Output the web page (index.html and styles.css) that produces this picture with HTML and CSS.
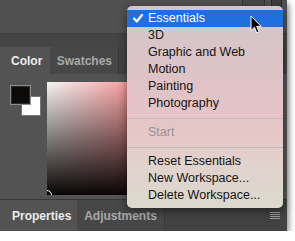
FILE: index.html
```html
<!DOCTYPE html>
<html lang="en">
<head>
  <meta charset="UTF-8">
  <title>Workspace Menu</title>
  <link rel="stylesheet" href="styles.css">
</head>
<body>

  <div class="panel">
    <div class="topbar">
      <span class="tb-btn wide"></span>
      <span class="tb-btn"></span>
    </div>
    <div class="band"></div>

    <div class="tabs">
      <div class="tab active">Color</div>
      <div class="tab">Swatches</div>
    </div>

    <div class="color-body">
      <div class="swatches">
        <div class="bg-swatch"></div>
        <div class="fg-swatch"></div>
      </div>
      <div class="field">
        <span class="ring"></span>
      </div>
    </div>

    <div class="tabs bottom">
      <div class="tab active">Properties</div>
      <div class="tab">Adjustments</div>
      <div class="panel-menu">
        <span></span><span></span><span></span><span></span>
      </div>
    </div>

    <!-- Workspace dropdown -->
    <div class="menu">
      <div class="item selected">
        <svg class="check" width="10" height="9" viewBox="0 0 10 9">
          <polyline points="1,4.5 3.8,7.5 9,1" fill="none" stroke="#fff" stroke-width="2.2" stroke-linecap="round" stroke-linejoin="round"/>
        </svg>
        Essentials
      </div>
      <div class="item">3D</div>
      <div class="item">Graphic and Web</div>
      <div class="item">Motion</div>
      <div class="item">Painting</div>
      <div class="item">Photography</div>
      <div class="sep"></div>
      <div class="item disabled">Start</div>
      <div class="sep"></div>
      <div class="item">Reset Essentials</div>
      <div class="item">New Workspace...</div>
      <div class="item">Delete Workspace...</div>
    </div>

    <svg class="cursor" width="13" height="20" viewBox="0 0 13 20">
      <path d="M1 1 L1 15.5 L4.4 12.3 L6.9 18 L9.1 17 L6.7 11.4 L11.2 11.4 Z" fill="#000" stroke="#fff" stroke-width="1" stroke-linejoin="round"/>
    </svg>
  </div>

</body>
</html>
```

FILE: styles.css
```css
* {
  box-sizing: border-box;
}

body {
  margin: 0;
  background: #ffffff;
  font-family: 'Liberation Sans', Arial, sans-serif;
}

.panel {
  position: relative;
  width: 287px;
  height: 231px;
  background: #535353;
  display: flex;
  flex-direction: column;
  box-shadow: 2px 3px 6px rgba(0, 0, 0, 0.45);
}

/* Top bar */
.topbar {
  height: 34px;
  background: #505050;
  border-bottom: 1px solid #3e3e3e;
  display: flex;
  justify-content: flex-end;
  align-items: flex-start;
  gap: 6px;
  padding-right: 5px;
}

.tb-btn {
  width: 11px;
  height: 8px;
  background: #3c3c3c;
  border: 1px solid #2c2c2c;
  border-top: none;
  border-radius: 0 0 2px 2px;
}

.tb-btn.wide {
  width: 23px;
  background: #474747;
  border-color: #333;
}

.band {
  height: 13px;
  background: #454545;
}

/* Tabs */
.tabs {
  height: 27px;
  background: #424242;
  display: flex;
  align-items: stretch;
}

.tab {
  display: flex;
  align-items: center;
  padding: 0 9px;
  font-size: 12px;
  font-weight: bold;
  color: #a9a9a9;
  background: #474747;
  border-right: 1px solid #383838;
}

.tab.active {
  background: #535353;
  color: #ececec;
  padding: 0 8px 0 11px;
  border-right: none;
}

.tabs .tab:nth-child(2) {
  width: 69px;
  justify-content: center;
  padding: 0;
}

.tabs.bottom {
  height: 32px;
  border-top: 1px solid #383838;
}

.tabs.bottom .tab.active {
  padding: 0 9px 0 12px;
  width: 77px;
}

.tabs.bottom .tab:nth-child(2) {
  width: 88px;
}

.panel-menu {
  margin-left: auto;
  margin-right: 7px;
  display: flex;
  flex-direction: column;
  justify-content: center;
  gap: 1px;
}

.panel-menu span {
  display: block;
  width: 10px;
  height: 1px;
  background: #9c9c9c;
}

/* Color panel body */
.color-body {
  flex: 1;
  display: flex;
  align-items: flex-start;
  padding: 8px 0 0 10px;
  gap: 6px;
}

.swatches {
  position: relative;
  width: 31px;
  height: 31px;
  margin-top: 3px;
}

.fg-swatch {
  position: absolute;
  left: 0;
  top: 0;
  width: 21px;
  height: 20px;
  background: #0d0a0a;
  border: 1px solid #8c8c8c;
  box-shadow: inset 0 0 0 1px #2a2a2a;
}

.bg-swatch {
  position: absolute;
  right: 0;
  bottom: 0;
  width: 20px;
  height: 20px;
  background: #ffffff;
  border: 1px solid #777;
}

.field {
  position: relative;
  width: 222px;
  height: 113px;
  background:
    linear-gradient(to bottom, rgba(0, 0, 0, 0) 0%, #0a0505 100%),
    linear-gradient(to right, #f4f4f4 0%, #ff2a2a 85%, #ff2020 100%);
  overflow: hidden;
}

.ring {
  position: absolute;
  left: -5px;
  bottom: -5px;
  width: 10px;
  height: 10px;
  border: 1px solid #fff;
  border-radius: 50%;
}

/* Dropdown menu */
.menu {
  position: absolute;
  left: 127px;
  top: 6px;
  width: 156px;
  height: 202px;
  padding: 4px 0;
  border-radius: 5px;
  background: linear-gradient(to bottom, #cfc7ca 0%, #d9c4c7 22%, #e4c3c6 50%, #e6c8c8 65%, #e0d3ce 80%, #dcd9cc 100%);
  box-shadow: 0 3px 10px rgba(0, 0, 0, 0.45);
}

.item {
  position: relative;
  height: 17px;
  line-height: 17px;
  padding-left: 21px;
  font-size: 12.5px;
  color: #161414;
  white-space: nowrap;
}

.item.selected {
  background: #1f6fde;
  color: #ffffff;
}

.item.disabled {
  color: #9a9090;
}

.check {
  position: absolute;
  left: 6px;
  top: 4px;
}

.sep {
  height: 12px;
  display: flex;
  align-items: center;
}

.sep::after {
  content: "";
  display: block;
  width: 100%;
  height: 1px;
  background: #c4b9bb;
}

.cursor {
  position: absolute;
  left: 250px;
  top: 15px;
}
```
